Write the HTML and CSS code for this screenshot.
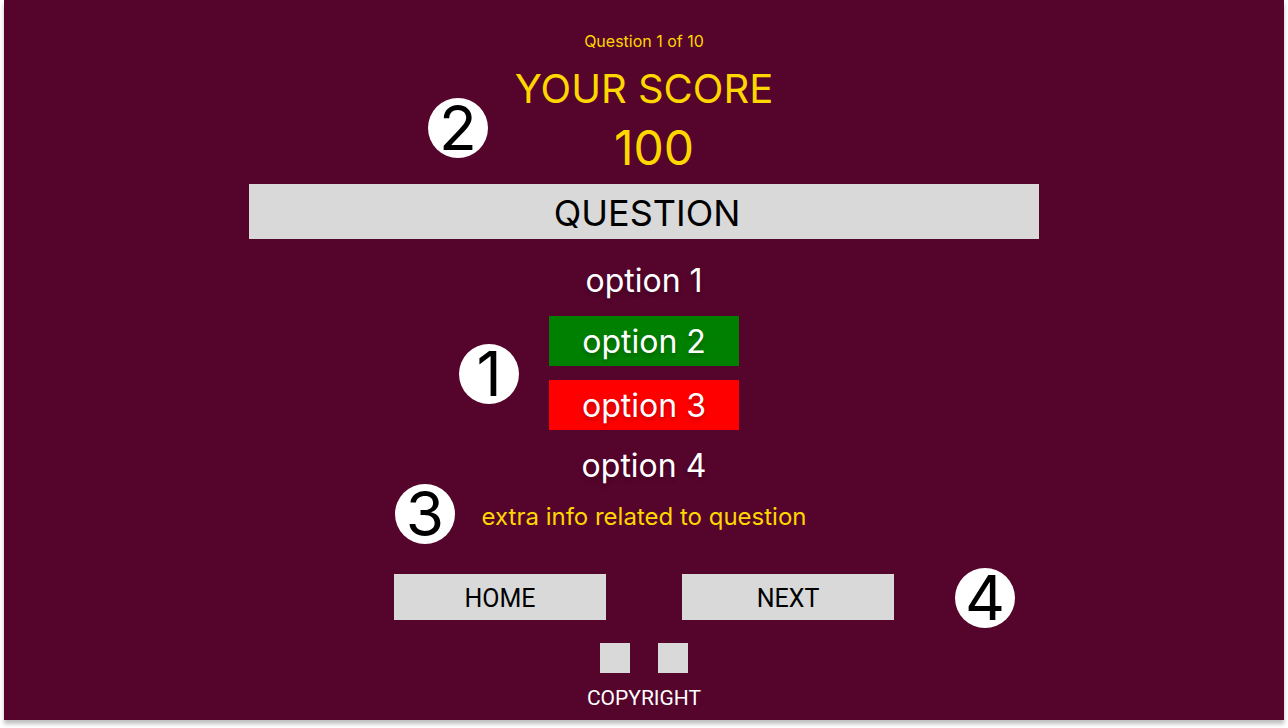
FILE: index.html
```html
<!DOCTYPE html>
<html lang="en">
<head>
<meta charset="utf-8">
<title>Quiz</title>
<link rel="stylesheet" href="styles.css">
</head>
<body>
<div class="frame">
  <div class="counter">Question 1 of 10</div>
  <div class="score-title">YOUR SCORE</div>
  <div class="score">100</div>
  <div class="question">QUESTION</div>
  <div class="option option-1">option 1</div>
  <div class="option option-box correct">option 2</div>
  <div class="option option-box wrong">option 3</div>
  <div class="option option-4">option 4</div>
  <div class="extra">extra info related to question</div>
  <div class="buttons">
    <div class="btn">HOME</div>
    <div class="btn">NEXT</div>
  </div>
  <div class="socials">
    <div class="social"></div>
    <div class="social"></div>
  </div>
  <div class="copyright">COPYRIGHT</div>

  <div class="marker m1">1</div>
  <div class="marker m2">2</div>
  <div class="marker m3">3</div>
  <div class="marker m4">4</div>
</div>
</body>
</html>
```

FILE: styles.css
```css
* { box-sizing: border-box; }
html, body {
  margin: 0;
  padding: 0;
  background: #ffffff;
}
body {
  width: 1288px;
  height: 728px;
  overflow: hidden;
  padding-left: 4px;
  font-family: "Inter", "Noto Sans", sans-serif;
}
.frame {
  position: relative;
  width: 1280px;
  height: 720px;
  background: #55042c;
  box-shadow: 0 4px 4px rgba(0, 0, 0, 0.25);
  display: flex;
  flex-direction: column;
  align-items: center;
  padding-top: 32px;
}
.counter {
  color: #ffd700;
  font-size: 16px;
  line-height: 19px;
}
.score-title {
  margin-top: 14px;
  color: #ffd700;
  font-size: 40px;
  line-height: 48px;
}
.score {
  margin-top: 6px;
  padding-left: 20px;
  color: #ffd700;
  font-size: 48px;
  line-height: 58px;
}
.question {
  margin-top: 7px;
  width: 790px;
  height: 55px;
  padding-left: 6px;
  background: #d9d9d9;
  color: #000000;
  font-size: 36px;
  line-height: 59px;
  text-align: center;
}
.option {
  color: #ffffff;
  font-size: 32px;
  line-height: 36px;
  text-align: center;
  text-shadow: 0 3px 4px rgba(0, 0, 0, 0.25);
}
.option-1 { margin-top: 24px; }
.option-box {
  width: 190px;
  height: 50px;
  line-height: 52px;
}
.correct { margin-top: 17px; background: #008000; }
.wrong { margin-top: 14px; background: #ff0000; }
.option-4 { margin-top: 18px; }
.extra {
  margin-top: 19px;
  color: #ffd700;
  font-size: 24px;
  line-height: 28px;
}
.buttons {
  margin-top: 43px;
  display: flex;
  gap: 76px;
}
.btn {
  width: 212px;
  height: 46px;
  background: #d9d9d9;
  color: #000000;
  font-family: "Roboto", "Liberation Sans", sans-serif;
  font-size: 25px;
  line-height: 50px;
  text-align: center;
}
.socials {
  margin-top: 23px;
  display: flex;
  gap: 28px;
}
.social {
  width: 30px;
  height: 30px;
  background: #d9d9d9;
}
.copyright {
  margin-top: 13px;
  color: #ffffff;
  font-family: "Roboto", "Liberation Sans", sans-serif;
  font-size: 21px;
  line-height: 24px;
}
.marker {
  position: absolute;
  width: 60px;
  height: 60px;
  border-radius: 50%;
  background: #ffffff;
  color: #000000;
  font-size: 62px;
  line-height: 60px;
  text-align: center;
}
.m1 { left: 455px; top: 344px; }
.m2 { left: 424px; top: 98px; }
.m3 { left: 391px; top: 484px; }
.m4 { left: 951px; top: 568px; }
```
